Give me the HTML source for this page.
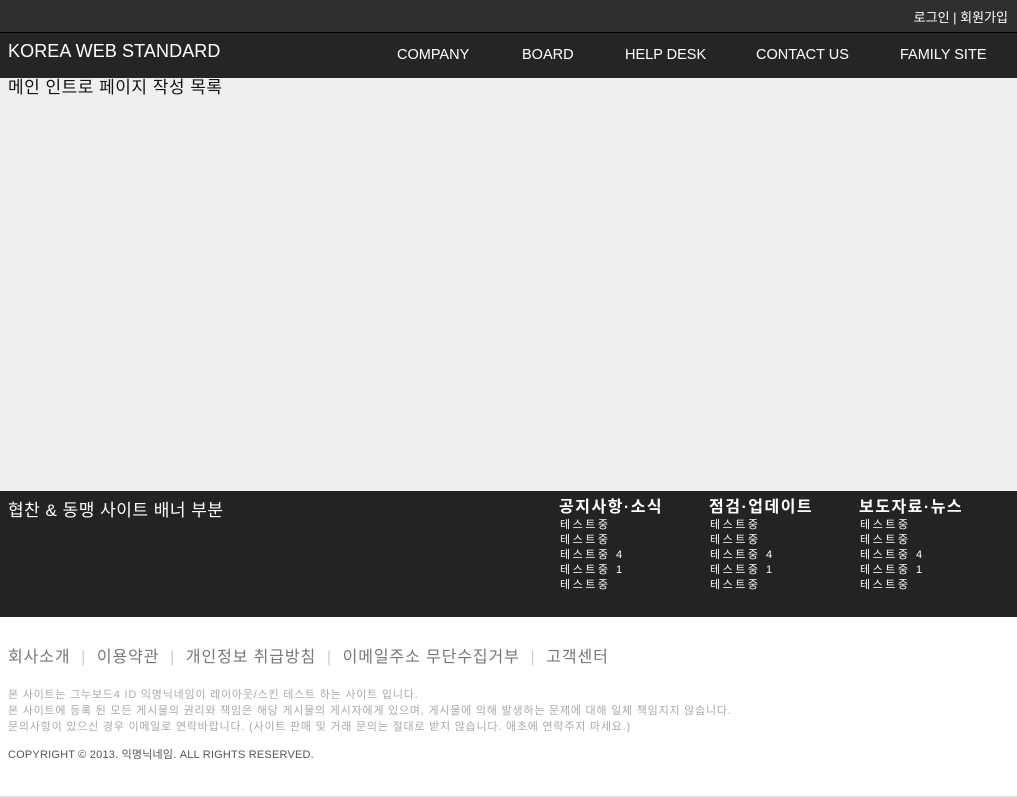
<!DOCTYPE html>
<html><head><meta charset="utf-8"><style>
body{margin:0;width:1017px;height:798px;position:relative;background:#fff;font-family:"Liberation Sans","Noto Sans CJK KR",sans-serif;overflow:hidden}
div{position:absolute;box-sizing:border-box}
.t{white-space:nowrap}
.c{color:#fff;font-size:11px;line-height:15px;letter-spacing:2.5px}
.c b{display:block;font-size:16px;line-height:20px;letter-spacing:1.5px;margin-left:-1px}
</style></head><body>
<div style="left:0;top:0;width:1017px;height:32px;background:#2f2f2f"></div>
<div class="t" style="right:9px;top:7px;color:#fff;font-size:13px">로그인 | 회원가입</div>
<div style="left:0;top:32px;width:1017px;height:1px;background:#000"></div>
<div style="left:0;top:33px;width:1017px;height:45px;background:#252527"></div>
<div class="t" style="left:8px;top:41px;color:#fff;font-size:18px;letter-spacing:0.1px">KOREA WEB STANDARD</div>
<div class="t" style="left:397px;top:47px;color:#fff;font-size:14.5px">COMPANY</div>
<div class="t" style="left:522px;top:47px;color:#fff;font-size:14.5px">BOARD</div>
<div class="t" style="left:625px;top:47px;color:#fff;font-size:14.5px">HELP DESK</div>
<div class="t" style="left:756px;top:47px;color:#fff;font-size:14.5px">CONTACT US</div>
<div class="t" style="left:900px;top:47px;color:#fff;font-size:14.5px">FAMILY SITE</div>
<div style="left:0;top:78px;width:1017px;height:413px;background:#efefef"></div>
<div class="t" style="left:8px;top:73px;color:#111;font-size:17px;letter-spacing:0.5px">메인 인트로 페이지 작성 목록</div>
<div style="left:0;top:491px;width:1017px;height:126px;background:#232325"></div>
<div class="t" style="left:8px;top:496px;color:#fff;font-size:17px;letter-spacing:0.5px">협찬 &amp; 동맹 사이트 배너 부분</div>
<div class="c" style="left:560px;top:498px"><b>공지사항·소식</b>테스트중<br>테스트중<br>테스트중 4<br>테스트중 1<br>테스트중</div>
<div class="c" style="left:710px;top:498px"><b>점검·업데이트</b>테스트중<br>테스트중<br>테스트중 4<br>테스트중 1<br>테스트중</div>
<div class="c" style="left:860px;top:498px"><b>보도자료·뉴스</b>테스트중<br>테스트중<br>테스트중 4<br>테스트중 1<br>테스트중</div>
<div class="t" style="left:8px;top:643px;color:#777;font-size:16px;letter-spacing:0.9px">회사소개 <span style="color:#ccc">&nbsp;|&nbsp;</span> 이용약관 <span style="color:#ccc">&nbsp;|&nbsp;</span> 개인정보 취급방침 <span style="color:#ccc">&nbsp;|&nbsp;</span> 이메일주소 무단수집거부 <span style="color:#ccc">&nbsp;|&nbsp;</span> 고객센터</div>
<div class="t" style="left:8px;top:687px;color:#aaa;font-size:11px;line-height:16px;letter-spacing:0.78px">본 사이트는 그누보드4 ID 익명닉네임이 레이아웃/스킨 테스트 하는 사이트 입니다.<br>본 사이트에 등록 된 모든 게시물의 권리와 책임은 해당 게시물의 게시자에게 있으며, 게시물에 의해 발생하는 문제에 대해 일체 책임지지 않습니다.<br>문의사항이 있으신 경우 이메일로 연락바랍니다. (사이트 판매 및 거래 문의는 절대로 받지 않습니다. 애초에 연락주지 마세요.)</div>
<div class="t" style="left:8px;top:746px;color:#555;font-size:11px;letter-spacing:0.2px">COPYRIGHT © 2013. 익명닉네임. ALL RIGHTS RESERVED.</div>
<div style="left:0;top:796px;width:1017px;height:2px;background:#ddd"></div>
</body></html>
